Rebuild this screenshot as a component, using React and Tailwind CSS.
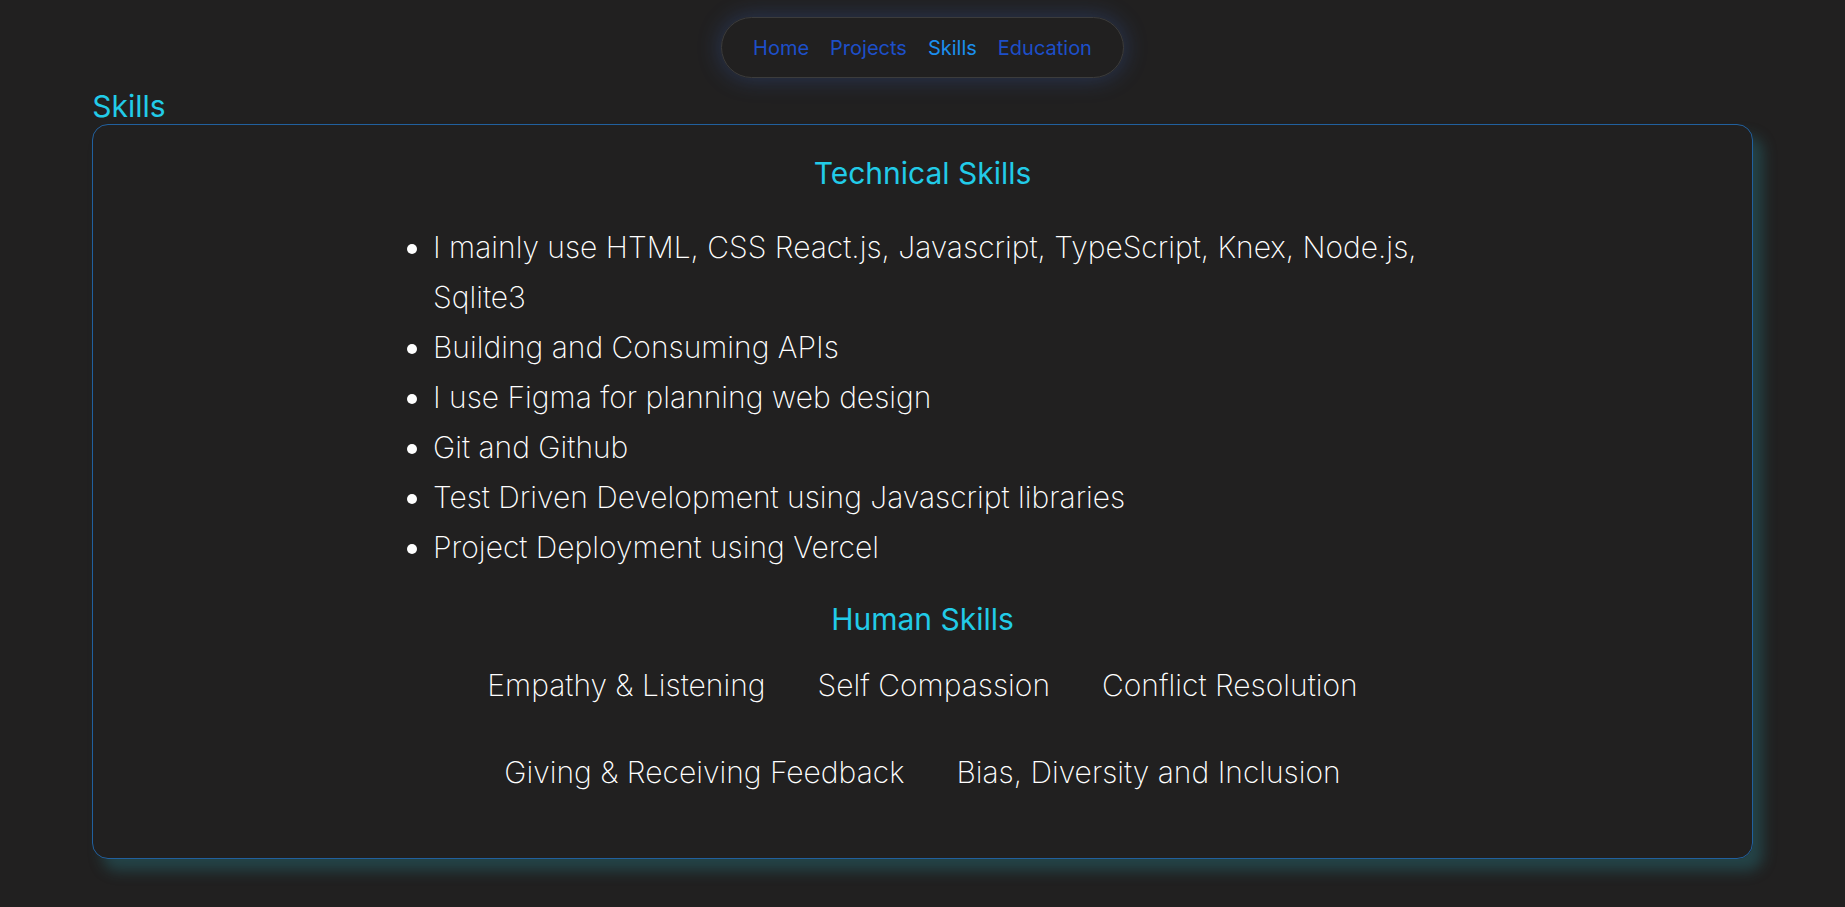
import React from 'react';

const navLinks = [
  { label: 'Home', active: false },
  { label: 'Projects', active: false },
  { label: 'Skills', active: true },
  { label: 'Education', active: false },
];

const technicalSkills = [
  'I mainly use HTML, CSS React.js, Javascript, TypeScript, Knex, Node.js, Sqlite3',
  'Building and Consuming APIs',
  'I use Figma for planning web design',
  'Git and Github',
  'Test Driven Development using Javascript libraries',
  'Project Deployment using Vercel',
];

const humanSkills = [
  ['Empathy & Listening', 'Self Compassion', 'Conflict Resolution'],
  ['Giving & Receiving Feedback', 'Bias, Diversity and Inclusion'],
];

const App = () => {
  return (
    <div
      className="min-h-screen bg-[#212020] pt-[17px] pb-10"
      style={{ fontFamily: 'Inter, "Noto Sans", sans-serif' }}
    >
      {/* Nav pill */}
      <nav className="mx-auto flex h-[61px] w-fit items-center gap-[21px] rounded-full border border-[#3c3c3c] px-[31px] shadow-[0_0_24px_rgba(59,110,220,0.3)]">
        {navLinks.map(link => (
          <a
            key={link.label}
            href="#"
            className={`text-[20px] ${link.active ? 'text-[#1b8fef]' : 'text-[#1d4fc9]'}`}
          >
            {link.label}
          </a>
        ))}
      </nav>

      <h2 className="mt-[10px] ml-[5%] text-[30px] leading-[36px] text-[#22cbe8]">Skills</h2>

      {/* Skills card */}
      <section className="mx-auto w-[90%] rounded-2xl border border-[#21609e] pt-[27px] pb-[61px] shadow-[10px_12px_14px_rgba(40,120,130,0.4)]">
        <h3 className="text-center text-[30px] leading-[42px] text-[#22cbe8]">Technical Skills</h3>

        <ul className="mx-auto mt-[28px] w-[1059px] list-disc pl-10 text-[30px] leading-[50px] font-extralight text-white">
          {technicalSkills.map(skill => (
            <li key={skill}>{skill}</li>
          ))}
        </ul>

        <h3 className="mt-[26px] text-center text-[30px] leading-[42px] text-[#22cbe8]">Human Skills</h3>

        <div className="mt-[20px] flex flex-col gap-[37px]">
          {humanSkills.map((row, i) => (
            <div key={i} className="flex justify-center gap-[52px]">
              {row.map(skill => (
                <span key={skill} className="text-[30px] leading-[50px] font-extralight text-white">
                  {skill}
                </span>
              ))}
            </div>
          ))}
        </div>
      </section>
    </div>
  );
};

export default App;
